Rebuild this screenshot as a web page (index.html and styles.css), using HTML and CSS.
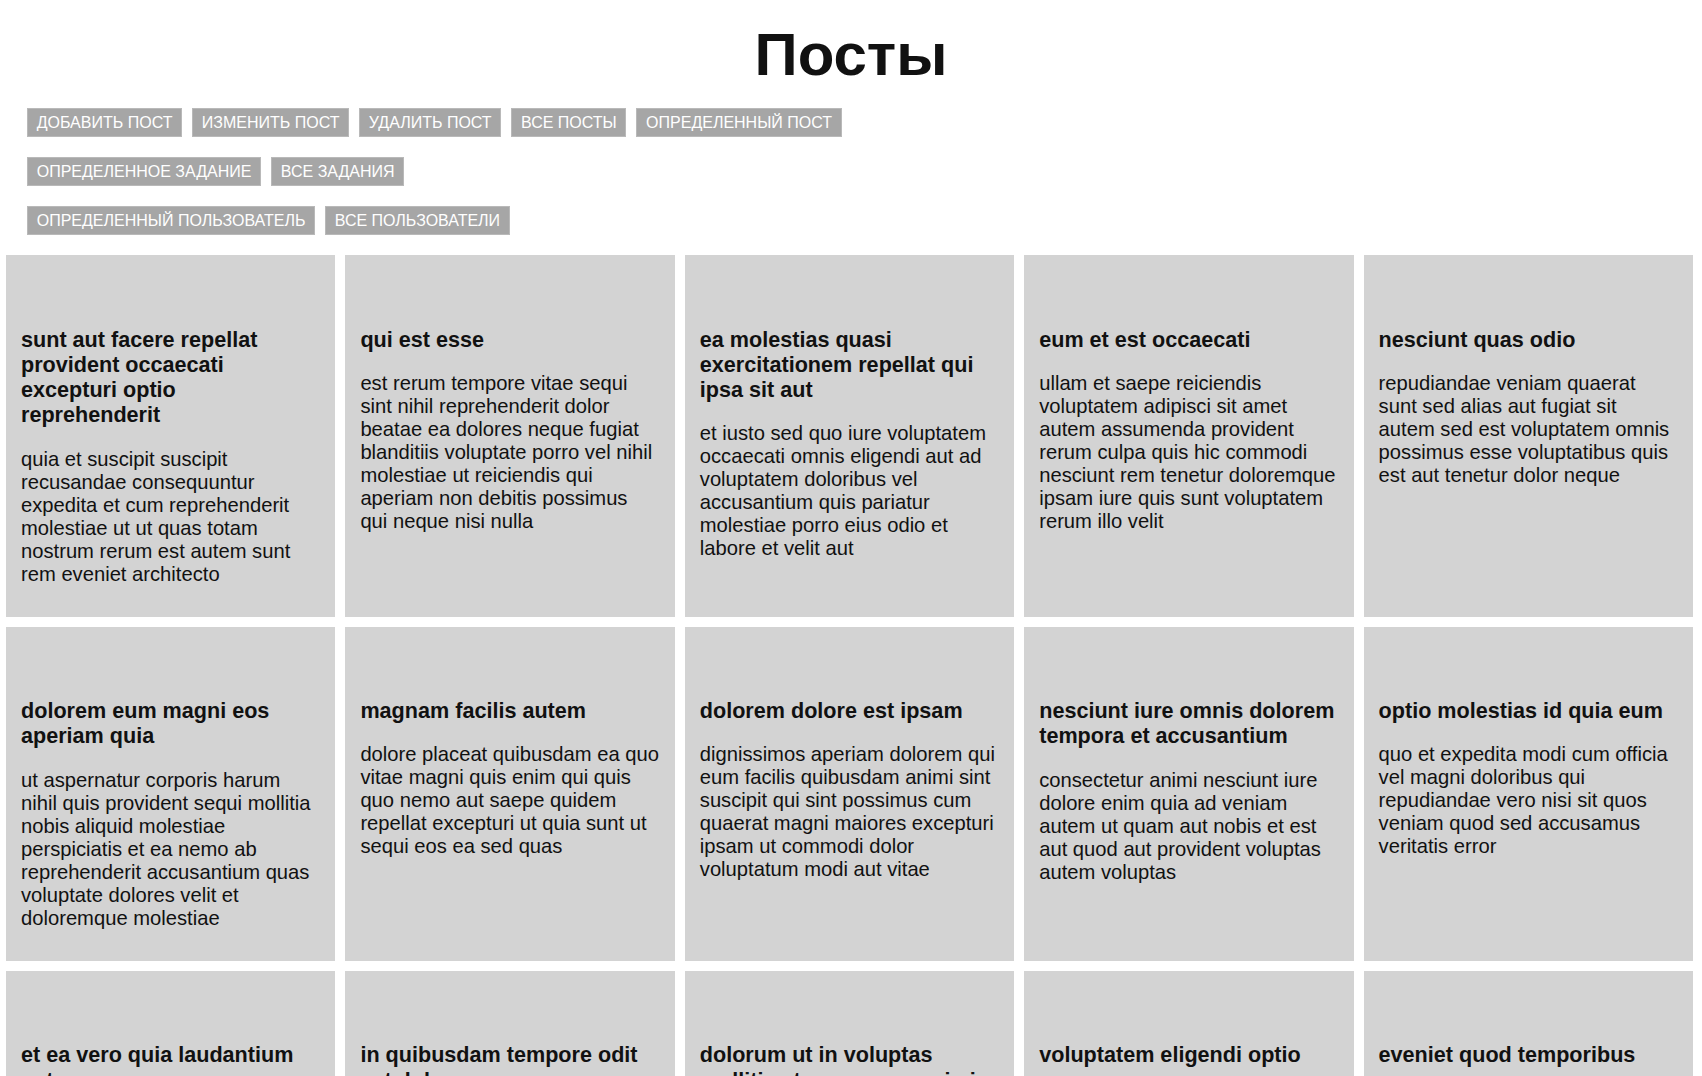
FILE: index.html
```html
<!DOCTYPE html>
<html lang="ru">
<head>
<meta charset="utf-8">
<title>Посты</title>
<link rel="stylesheet" href="styles.css">
</head>
<body>
<h1 class="page-title">Посты</h1>
<div class="toolbar">
  <div class="btn-row">
    <button class="btn">Добавить пост</button>
    <button class="btn">Изменить пост</button>
    <button class="btn">Удалить пост</button>
    <button class="btn">Все посты</button>
    <button class="btn">Определенный пост</button>
  </div>
  <div class="btn-row">
    <button class="btn">Определенное задание</button>
    <button class="btn">Все задания</button>
  </div>
  <div class="btn-row">
    <button class="btn">Определенный пользователь</button>
    <button class="btn">Все пользователи</button>
  </div>
</div>
<div class="posts">
  <div class="post"><h3 class="post-title">sunt aut facere repellat provident occaecati excepturi optio reprehenderit</h3><p class="post-body">quia et suscipit suscipit recusandae consequuntur expedita et cum reprehenderit molestiae ut ut quas totam nostrum rerum est autem sunt rem eveniet architecto</p></div>
  <div class="post"><h3 class="post-title">qui est esse</h3><p class="post-body">est rerum tempore vitae sequi sint nihil reprehenderit dolor beatae ea dolores neque fugiat blanditiis voluptate porro vel nihil molestiae ut reiciendis qui aperiam non debitis possimus qui neque nisi nulla</p></div>
  <div class="post"><h3 class="post-title">ea molestias quasi exercitationem repellat qui ipsa sit aut</h3><p class="post-body">et iusto sed quo iure voluptatem occaecati omnis eligendi aut ad voluptatem doloribus vel accusantium quis pariatur molestiae porro eius odio et labore et velit aut</p></div>
  <div class="post"><h3 class="post-title">eum et est occaecati</h3><p class="post-body">ullam et saepe reiciendis voluptatem adipisci sit amet autem assumenda provident rerum culpa quis hic commodi nesciunt rem tenetur doloremque ipsam iure quis sunt voluptatem rerum illo velit</p></div>
  <div class="post"><h3 class="post-title">nesciunt quas odio</h3><p class="post-body">repudiandae veniam quaerat sunt sed alias aut fugiat sit autem sed est voluptatem omnis possimus esse voluptatibus quis est aut tenetur dolor neque</p></div>
  <div class="post"><h3 class="post-title">dolorem eum magni eos aperiam quia</h3><p class="post-body">ut aspernatur corporis harum nihil quis provident sequi mollitia nobis aliquid molestiae perspiciatis et ea nemo ab reprehenderit accusantium quas voluptate dolores velit et doloremque molestiae</p></div>
  <div class="post"><h3 class="post-title">magnam facilis autem</h3><p class="post-body">dolore placeat quibusdam ea quo vitae magni quis enim qui quis quo nemo aut saepe quidem repellat excepturi ut quia sunt ut sequi eos ea sed quas</p></div>
  <div class="post"><h3 class="post-title">dolorem dolore est ipsam</h3><p class="post-body">dignissimos aperiam dolorem qui eum facilis quibusdam animi sint suscipit qui sint possimus cum quaerat magni maiores excepturi ipsam ut commodi dolor voluptatum modi aut vitae</p></div>
  <div class="post"><h3 class="post-title">nesciunt iure omnis dolorem tempora et accusantium</h3><p class="post-body">consectetur animi nesciunt iure dolore enim quia ad veniam autem ut quam aut nobis et est aut quod aut provident voluptas autem voluptas</p></div>
  <div class="post"><h3 class="post-title">optio molestias id quia eum</h3><p class="post-body">quo et expedita modi cum officia vel magni doloribus qui repudiandae vero nisi sit quos veniam quod sed accusamus veritatis error</p></div>
  <div class="post"><h3 class="post-title">et ea vero quia laudantium autem</h3><p class="post-body">delectus reiciendis molestiae occaecati non minima eveniet qui voluptatibus accusamus in eum beatae sit vel qui neque voluptates ut commodi qui incidunt ut animi commodi</p></div>
  <div class="post"><h3 class="post-title">in quibusdam tempore odit est dolorem</h3><p class="post-body">itaque id aut magnam praesentium quia et ea odit et ea voluptas et sapiente quia nihil amet occaecati quia id voluptatem incidunt ea est distinctio odio</p></div>
  <div class="post"><h3 class="post-title">dolorum ut in voluptas mollitia et saepe quo animi</h3><p class="post-body">aut dicta possimus sint mollitia voluptas commodi quo doloremque iste corrupti reiciendis voluptatem eius rerum sit cumque quod eligendi laborum minima perferendis recusandae assumenda consectetur porro architecto ipsum ipsam</p></div>
  <div class="post"><h3 class="post-title">voluptatem eligendi optio</h3><p class="post-body">fuga et accusamus dolorum perferendis illo voluptas non doloremque neque facere ad qui dolorum molestiae beatae sed aut voluptas totam sit illum</p></div>
  <div class="post"><h3 class="post-title">eveniet quod temporibus</h3><p class="post-body">reprehenderit quos placeat velit minima officia dolores impedit repudiandae molestiae nam voluptas recusandae quis delectus officiis harum fugiat vitae</p></div>
</div>
</body>
</html>
```

FILE: styles.css
```css
html, body {
  margin: 0;
  padding: 0;
  background: #ffffff;
}

body {
  font-family: "Liberation Sans", Arial, sans-serif;
  color: #111111;
}

.page-title {
  margin: 20px 0 19px;
  font-size: 60px;
  font-weight: bold;
  text-align: center;
  color: #111111;
  line-height: normal;
}

.toolbar {
  display: flex;
  flex-direction: column;
  gap: 20px;
  padding-left: 27px;
}

.btn-row {
  display: flex;
  gap: 10px;
}

.btn {
  box-sizing: border-box;
  height: 29px;
  padding: 0 8.7px;
  border: 1px solid #b9b9b9;
  background: #a6a6a6;
  color: #ffffff;
  font-family: "Liberation Sans", Arial, sans-serif;
  font-size: 16px;
  text-transform: uppercase;
  cursor: pointer;
}

.posts {
  display: grid;
  grid-template-columns: repeat(5, 1fr);
  gap: 10px;
  padding: 0 9px 0 6px;
  margin-top: 20px;
}

.post {
  background: #d3d3d3;
  padding: 71.5px 15px 31px;
}

.post-title {
  margin: 0 0 20px;
  font-size: 21.6px;
  font-weight: bold;
  line-height: 25.3px;
  color: #111111;
}

.post-body {
  margin: 0;
  font-size: 20.2px;
  line-height: 23px;
  color: #111111;
}
```
